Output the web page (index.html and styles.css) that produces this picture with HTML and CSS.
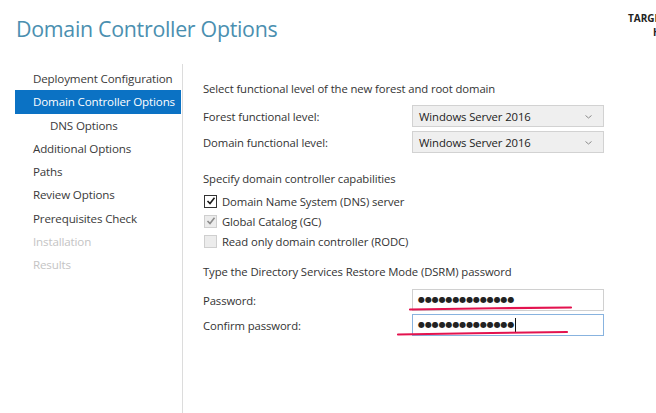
FILE: index.html
```html
<!DOCTYPE html>
<html>
<head>
<meta charset="utf-8">
<link rel="stylesheet" href="styles.css">
</head>
<body>
<div class="page">
  <header class="header">
    <h1 class="title">Domain Controller Options</h1>
    <div class="target">
      <div class="target-line">TARGET SERVER</div>
      <div class="target-line">HOST</div>
    </div>
  </header>
  <div class="body">
    <nav class="sidebar">
      <div class="nav-item">Deployment Configuration</div>
      <div class="nav-item active">Domain Controller Options</div>
      <div class="nav-item sub">DNS Options</div>
      <div class="nav-item">Additional Options</div>
      <div class="nav-item">Paths</div>
      <div class="nav-item">Review Options</div>
      <div class="nav-item">Prerequisites Check</div>
      <div class="nav-item disabled">Installation</div>
      <div class="nav-item disabled">Results</div>
    </nav>
    <main class="main">
      <div class="section-title first">Select functional level of the new forest and root domain</div>
      <div class="form-row">
        <div class="label">Forest functional level:</div>
        <div class="select"><span>Windows Server 2016</span><svg class="chev" width="7" height="4" viewBox="0 0 7 4"><path d="M0.5 0.5 L3.5 3 L6.5 0.5" fill="none" stroke="#8a8a8a" stroke-width="1"/></svg></div>
      </div>
      <div class="form-row">
        <div class="label">Domain functional level:</div>
        <div class="select"><span>Windows Server 2016</span><svg class="chev" width="7" height="4" viewBox="0 0 7 4"><path d="M0.5 0.5 L3.5 3 L6.5 0.5" fill="none" stroke="#8a8a8a" stroke-width="1"/></svg></div>
      </div>

      <div class="section-title second">Specify domain controller capabilities</div>
      <div class="checks">
        <div class="check-row">
          <span class="box checked"><svg width="10" height="10" viewBox="0 0 10 10"><path d="M1.5 5 L4 7.5 L8.5 1.8" fill="none" stroke="#1a1a1a" stroke-width="1.6"/></svg></span>
          <span class="check-label">Domain Name System (DNS) server</span>
        </div>
        <div class="check-row">
          <span class="box grey"><svg width="10" height="10" viewBox="0 0 10 10"><path d="M1.5 5 L4 7.5 L8.5 1.8" fill="none" stroke="#8c8c8c" stroke-width="1.6"/></svg></span>
          <span class="check-label">Global Catalog (GC)</span>
        </div>
        <div class="check-row">
          <span class="box grey"></span>
          <span class="check-label">Read only domain controller (RODC)</span>
        </div>
      </div>

      <div class="section-title third">Type the Directory Services Restore Mode (DSRM) password</div>
      <div class="form-row pw">
        <div class="label">Password:</div>
        <div class="input"><span class="dots">●●●●●●●●●●●●●●</span></div>
      </div>
      <div class="form-row pw">
        <div class="label">Confirm password:</div>
        <div class="input focus"><span class="dots">●●●●●●●●●●●●●●</span><span class="caret"></span></div>
      </div>
    </main>
  </div>
  <svg class="scribble" width="656" height="413" viewBox="0 0 656 413">
    <path d="M410 309.5 C 460 308.5, 520 308, 571 307.5" fill="none" stroke="#e3134f" stroke-width="2.2" stroke-linecap="round"/>
    <path d="M398 334.5 C 450 333.5, 520 332.5, 567 332" fill="none" stroke="#e3134f" stroke-width="2.2" stroke-linecap="round"/>
  </svg>
</div>
</body>
</html>
```

FILE: styles.css
```css
* { box-sizing: border-box; }
html, body {
  margin: 0;
  padding: 0;
  background: #ffffff;
}
body {
  font-family: "Open Sans", "Noto Sans", "Liberation Sans", sans-serif;
  color: #333333;
  width: 656px;
  height: 413px;
  overflow: hidden;
}
.page {
  position: relative;
  width: 656px;
  height: 413px;
  overflow: hidden;
}
.header {
  height: 64px;
  display: flex;
  justify-content: space-between;
  position: relative;
}
.title {
  margin: 0;
  padding: 14px 0 0 16px;
  font-size: 21.4px;
  font-weight: 400;
  color: #4a8fb0;
  letter-spacing: -0.3px;
  white-space: nowrap;
}
.target {
  position: absolute;
  left: 628px;
  top: 11px;
  font-size: 10px;
  font-weight: 700;
  color: #222;
  line-height: 14px;
  white-space: nowrap;
}
.target-line + .target-line {
  padding-left: 25px;
}
.body {
  display: flex;
  height: 349px;
}
.sidebar {
  width: 183px;
  flex: none;
  border-right: 1px solid #dcdcdc;
  padding: 3px 0 0 15px;
}
.nav-item {
  height: 23.3px;
  line-height: 23px;
  padding-left: 18px;
  font-size: 11.6px;
  color: #3a3a3a;
  white-space: nowrap;
  letter-spacing: -0.15px;
}
.nav-item.active {
  background: #0b72c4;
  color: #ffffff;
  margin-right: 1px;
}
.nav-item.sub {
  padding-left: 35px;
}
.nav-item.disabled {
  color: #c4c4c4;
}
.main {
  flex: 1;
  padding: 17px 0 0 20px;
  font-size: 11.3px;
  color: #333;
  letter-spacing: -0.1px;
}
.section-title {
  height: 16px;
  line-height: 16px;
  white-space: nowrap;
}
.section-title.first { margin-bottom: 8px; }
.section-title.second { margin-top: 18px; margin-bottom: 7px; }
.section-title.third { margin-top: 16px; margin-bottom: 9px; }
.form-row {
  display: flex;
  align-items: center;
  height: 22px;
  margin-bottom: 4px;
}
.label {
  width: 209px;
  flex: none;
  white-space: nowrap;
}
.select {
  width: 192px;
  height: 22px;
  background: #efefef;
  border: 1px solid #d2d2d2;
  display: flex;
  align-items: center;
  justify-content: space-between;
  padding: 0 11px 0 6px;
  color: #222;
  font-size: 11.3px;
}
.chev { display: block; margin-top: 1px; }
.checks {
  display: flex;
  flex-direction: column;
  gap: 6px;
}
.check-row {
  display: flex;
  align-items: center;
  height: 14px;
}
.box {
  width: 13px;
  height: 13px;
  margin-left: 1px;
  margin-right: 5px;
  display: flex;
  align-items: center;
  justify-content: center;
  flex: none;
}
.box.checked {
  border: 1px solid #333;
  background: #fff;
}
.box.grey {
  border: 1px solid #cfcfcf;
  background: #ececec;
}
.check-label { white-space: nowrap; }
.form-row.pw { margin-bottom: 3px; }
.input {
  width: 192px;
  height: 22px;
  border: 1px solid #d0d0d0;
  background: #fff;
  display: flex;
  align-items: center;
  padding-left: 5px;
}
.input.focus {
  border-color: #88b3df;
}
.dots {
  font-family: "DejaVu Sans", sans-serif;
  font-size: 8px;
  letter-spacing: -0.1px;
  color: #222;
  line-height: 10px;
}
.caret {
  display: inline-block;
  width: 1px;
  height: 14px;
  background: #111;
  margin-left: 1px;
}
.scribble {
  position: absolute;
  left: 0;
  top: 0;
  pointer-events: none;
}
```
